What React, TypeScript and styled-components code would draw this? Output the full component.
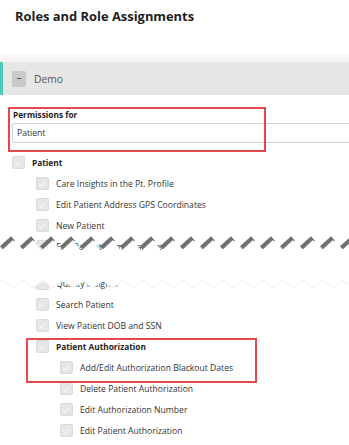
import { ReactElement } from 'react'
import styled, { createGlobalStyle } from 'styled-components'

const GlobalStyle = createGlobalStyle`
    html, body {
        margin: 0;
        padding: 0;
        background: #ffffff;
        font-family: 'Open Sans', 'Liberation Sans', sans-serif;
        overflow: hidden;
    }
`

const Page = styled.div`
    width: 349px;
    height: 445px;
    overflow: hidden;
`

const TitleBar = styled.div`
    height: 53px;
    box-sizing: border-box;
    padding: 7px 0 0 15px;

    h1 {
        margin: 0;
        font-size: 12.9px;
        line-height: 18px;
        font-weight: 700;
        color: #1e1e1e;
    }
`

const Band = styled.div`
    height: 9px;
    background: linear-gradient(#fbfbfb, #f1f1f1);
`

const SectionHeader = styled.div`
    height: 33px;
    display: flex;
    align-items: center;
    gap: 8px;
    box-sizing: border-box;
    padding-left: 9px;
    background: #e6e6e6;
    border-left: 3px solid #4fc8b9;
    font-size: 10.3px;
    color: #555;
`

const Toggle = styled.span`
    width: 14px;
    height: 16px;
    border-radius: 2px;
    background: #c9c9c9;
    display: flex;
    align-items: center;
    justify-content: center;

    &::before {
        content: '';
        width: 4px;
        height: 1.5px;
        background: #555;
    }
`

const Body = styled.div`
    padding-left: 12px;
`

const PermBlock = styled.div`
    position: relative;
    margin-top: 14px;
`

const Label = styled.div`
    font-size: 8.3px;
    line-height: 12px;
    font-weight: 700;
    color: #222;
    padding-left: 1px;
`

const Input = styled.div`
    margin-top: 2px;
    width: 345px;
    height: 20px;
    box-sizing: border-box;
    border: 1px solid #d2d2d2;
    border-radius: 2px;
    padding-left: 4px;
    display: flex;
    align-items: center;
    font-size: 8.6px;
    color: #333;
`

const Callout = styled.div<{ $top: number; $left: number; $w: number; $h: number }>`
    position: absolute;
    top: ${(p) => p.$top}px;
    left: ${(p) => p.$left}px;
    width: ${(p) => p.$w}px;
    height: ${(p) => p.$h}px;
    box-sizing: border-box;
    border: 2px solid #e5484b;
    pointer-events: none;
`

const Tree = styled.div`
    margin-top: 9px;
`

const Row = styled.div<{ $level: number; $bold?: boolean }>`
    height: 21px;
    display: flex;
    align-items: center;
    gap: 7.5px;
    padding-left: ${(p) => p.$level * 24}px;
    font-size: ${(p) => (p.$bold ? 8.3 : 8.6)}px;
    font-weight: ${(p) => (p.$bold ? 700 : 400)};
    color: ${(p) => (p.$bold ? '#222' : '#333')};
    white-space: nowrap;
`

const Box = styled.span`
    width: 12.5px;
    height: 12.5px;
    flex: none;
    box-sizing: border-box;
    border: 1px solid #dadada;
    border-radius: 2px;
    background: #e6e6e6;
    display: flex;
    align-items: center;
    justify-content: center;

    svg {
        display: block;
    }
`

const Group = styled.div`
    position: relative;
`

const TearGap = styled.div`
    position: relative;

    svg {
        position: absolute;
        top: 0;
        left: -12px;
        pointer-events: none;
    }
`

const Spacer = styled.div`
    height: 16px;
`

function Check(): ReactElement {
    return (
        <Box>
            <svg width='10' height='10' viewBox='0 0 10 10'>
                <path
                    d='M2.4 5.2 L4.2 7 L7.8 3.2'
                    fill='none'
                    stroke='#f6f6f6'
                    strokeWidth='1.2'
                />
            </svg>
        </Box>
    )
}

function Item({
    level,
    label,
    bold,
}: {
    level: number
    label: string
    bold?: boolean
}): ReactElement {
    return (
        <Row $level={level} $bold={bold}>
            <Check />
            <span>{label}</span>
        </Row>
    )
}

function Tear(): ReactElement {
    const top: string[] = []
    const bottom: string[] = []
    const ups: ReactElement[] = []
    for (let k = -1; k < 19; k++) {
        const x = k * 20
        top.push(`${x + 1},15`, `${x + 13},4`)
        ups.push(
            <line
                key={k}
                x1={x + 2}
                y1={14}
                x2={x + 13}
                y2={4}
                stroke='#6f6f6f'
                strokeWidth='6'
            />
        )
    }
    for (let k = 18; k >= -1; k--) {
        const x = k * 20
        bottom.push(`${x + 13},51`, `${x + 3},44`)
    }
    const bottomLine = bottom.join(' ')
    return (
        <svg width='349' height='57' viewBox='0 0 349 57'>
            <defs>
                <filter id='soft' x='-10%' y='-50%' width='120%' height='200%'>
                    <feGaussianBlur stdDeviation='0.7' />
                </filter>
            </defs>
            <g filter='url(#soft)' transform='translate(0 -1.5)'>
                {ups}
            </g>
            <polyline
                points={bottomLine}
                fill='none'
                stroke='#f3f3f3'
                strokeWidth='1.5'
                filter='url(#soft)'
                transform='translate(0 0.5)'
            />
            <polygon points={[...top, ...bottom].join(' ')} fill='#ffffff' />
        </svg>
    )
}

export default function App(): ReactElement {
    return (
        <Page>
            <GlobalStyle />
            <TitleBar>
                <h1>Roles and Role Assignments</h1>
            </TitleBar>
            <Band />
            <SectionHeader>
                <Toggle />
                <span>Demo</span>
            </SectionHeader>
            <Body>
                <PermBlock>
                    <Label>Permissions for</Label>
                    <Input>Patient</Input>
                    <Callout $top={-2} $left={-4} $w={258} $h={45} />
                </PermBlock>
                <Tree>
                    <Item level={0} label='Patient' bold />
                    <Item level={1} label='Care Insights in the Pt. Profile' />
                    <Item level={1} label='Edit Patient Address GPS Coordinates' />
                    <Item level={1} label='New Patient' />
                    <TearGap>
                        <Item level={1} label='Edit Patient Demographics' />
                        <Spacer />
                        <Item level={1} label='Quality Insights' />
                        <Tear />
                    </TearGap>
                    <Item level={1} label='Search Patient' />
                    <Item level={1} label='View Patient DOB and SSN' />
                    <Group>
                        <Item level={1} label='Patient Authorization' bold />
                        <Item level={2} label='Add/Edit Authorization Blackout Dates' />
                        <Callout $top={2} $left={14} $w={231} $h={45} />
                    </Group>
                    <Item level={2} label='Delete Patient Authorization' />
                    <Item level={2} label='Edit Authorization Number' />
                    <Item level={2} label='Edit Patient Authorization' />
                </Tree>
            </Body>
        </Page>
    )
}
